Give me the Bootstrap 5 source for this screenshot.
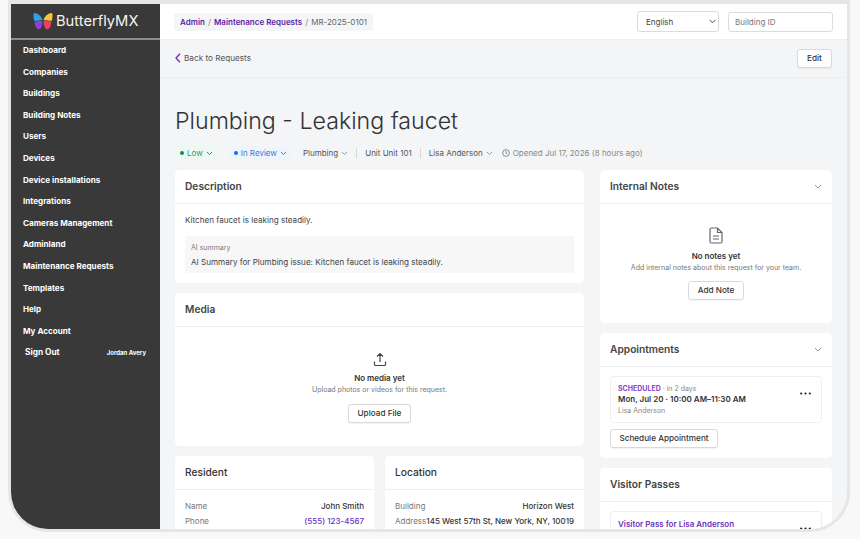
<!DOCTYPE html>
<html lang="en">
<head>
<meta charset="utf-8">
<title>Plumbing - Leaking faucet</title>
<link href="https://cdn.jsdelivr.net/npm/bootstrap@5.3.0/dist/css/bootstrap.min.css" rel="stylesheet">
<style>
html,body{height:539px;overflow:hidden}
body{background:#f8f8f8;font-family:Inter,"Liberation Sans",sans-serif;color:#333;font-size:8px}
.frame{width:842px;height:532px;margin-left:8px;border:3px solid #e6e6e6;border-top-width:4px;border-radius:0 0 40px 40px;overflow:hidden;background:#f4f5f7}
.side{width:149px;flex:none;background:#393939;color:#fff}
.brand{height:36px;border-bottom:2px solid #8a8a8a;font-size:14.7px;color:#f4f4f4;gap:3px;padding-left:22px}
.side-link{display:block;height:21.6px;line-height:21.6px;padding-left:12px;font-size:8.1px;font-weight:700;color:#fff;text-decoration:none;white-space:nowrap}
.signout{height:20px;padding:0 14px;font-weight:700;font-size:8.3px}
.signout span:last-child{font-size:6px}
.topbar{height:36px;background:#fff;border-bottom:1px solid #eceef0;padding:0 14px}
.crumbs{background:#f4f5f7;border-radius:3px;height:18px;padding:0 6px;font-size:8px;font-weight:600;gap:3px;color:#a0a0a0}
.crumbs a{color:#5b1fa8;text-decoration:none}
.crumbs .now{font-weight:400;color:#666}
.lang{width:82px;height:21px;font-size:8px;padding:0 0 0 8px;border-radius:3px;border:1px solid #dcdcdc;color:#444;background-size:7px;background-position:right 2px center;background-color:#fff;font-family:inherit;margin-right:9px}
.bid{width:105px;height:20px;font-size:8px;padding:0 6px;border-radius:3px;border:1px solid #dcdcdc}
.bid::placeholder{color:#777}
.subbar{height:38px;border-bottom:1px solid #eceef0;padding:0 15px;font-size:8.2px;color:#555}
.back{gap:3px}
.edit-btn,.plain-btn{background:#fff;border:1px solid #d9d9d9;border-radius:3px;font-size:8.2px;font-weight:500;color:#333;padding:0;line-height:1;box-shadow:0 1px 1px rgba(0,0,0,.05)}
.edit-btn{width:35px;height:19px}
.pad{padding:0 15px}
.ttl{font-size:23.2px;font-weight:300;color:#333;margin:28px 0 0;line-height:31px;height:31px}
.meta{height:18px;margin-top:7px;font-size:8px;color:#555;white-space:nowrap}
.pill{border-radius:9px;height:14px;padding:0 5px}
.pill-g{background:#eef8f3;color:#2a9d6c;margin-right:11px}
.pill-b{background:#eef4fc;color:#3d7ddb;margin-right:11px}
.dot{width:4px;height:4px;border-radius:50%;margin-right:3px}
.caret{margin-left:3px;flex:none}
.sep{width:1px;height:10px;background:#d8d8d8;margin:0 8px}
.clock{margin:0 3px 0 9px}
.cols{margin-top:8px;gap:16px}
.left-col{width:409px;flex:none}
.right-col{width:232px;flex:none}
.box{background:#fff;border:0;border-radius:4px;box-shadow:0 0 1px rgba(0,0,0,.05);margin-bottom:10px;overflow:hidden}
.box-h{height:34px;padding:0 10px;border-bottom:1px solid #f0f0f0;font-size:10.2px;font-weight:600;color:#444}
.box-h.lite{font-weight:500;color:#333}
.desc{padding:10px 10px 0;height:79px;font-size:8.1px;color:#444}
.ai{background:#f7f7f8;border-radius:3px;height:37px;margin-top:10px;padding:7px 6px}
.ai small{display:block;font-size:7px;color:#777;line-height:10px}
.ai div{line-height:13px;margin-top:3px}
.empty{text-align:center;height:119px}
.empty-m{padding-top:25px}
.empty-n{padding-top:23px}
.empty b{font-size:8px;font-weight:600;color:#333;display:block;line-height:12px}
.empty p{font-size:7px;color:#777;margin:0;line-height:11px}
.plain-btn{height:19px;display:inline-block}
.up{margin-top:9px;width:63px}
.note-btn{margin-top:8px;width:56px}
.ic-up{display:block;margin:0 auto 5px}
.ic-doc{display:block;margin:0 auto 6px}
.res-row{height:15px;font-size:8px;font-weight:500;color:#333;line-height:15px;white-space:nowrap}
.res-row span:first-child{color:#777;font-weight:400}
.res-row a{color:#6a2fc0;text-decoration:none}
.resbody{padding:9px 10px 0;height:60px}
.half{width:199px}
.pair{gap:11px}
.apptwrap{padding:9px 10px 0;height:91px}
.passwrap{padding:9px 10px 0;height:60px}
.appt{border:1px solid #eeeeee;border-radius:4px;height:47px;padding:6px 10px 6px 7px;line-height:11px}
.st{font-size:7px;font-weight:700;color:#8a44c4}
.gray7{font-size:7px;color:#888}
.when{font-size:8px;font-weight:600;color:#333}
.more{margin-top:9px;flex:none}
.pass{color:#6a2fc0;font-size:8px;font-weight:600;margin-top:1px}
.sched{width:108px;margin-top:6px}
.muted-t{color:#888}
</style>
</head>
<body>
<div class="frame d-flex">
  <nav class="side">
    <div class="brand d-flex align-items-center">
      <svg width="20" height="18" viewBox="0 0 20 18" aria-hidden="true">
        <path d="M1 1 C5 1 8 4 9.500 8 L1.500 9 C.5 7 0 3 1 1Z" fill="#2fa3e6"/>
        <path d="M19 1 C15 1 12 4 10.500 8 L18.500 9 C19.500 7 20 3 19 1Z" fill="#f5c63a"/>
        <path d="M1.500 9.500 L9.500 8.800 C9.500 12 8.500 17 6 17.300 C3.500 17.500 2 14 1.500 9.500Z" fill="#8a3fd8"/>
        <path d="M18.500 9.500 L10.500 8.800 C10.500 12 11.500 17 14 17.300 C16.500 17.500 18 14 18.500 9.500Z" fill="#ee3f63"/>
      </svg>
      <span>ButterflyMX</span>
    </div>
    <div>
      <a class="side-link" href="#">Dashboard</a>
      <a class="side-link" href="#">Companies</a>
      <a class="side-link" href="#">Buildings</a>
      <a class="side-link" href="#">Building Notes</a>
      <a class="side-link" href="#">Users</a>
      <a class="side-link" href="#">Devices</a>
      <a class="side-link" href="#">Device installations</a>
      <a class="side-link" href="#">Integrations</a>
      <a class="side-link" href="#">Cameras Management</a>
      <a class="side-link" href="#">Adminland</a>
      <a class="side-link" href="#">Maintenance Requests</a>
      <a class="side-link" href="#">Templates</a>
      <a class="side-link" href="#">Help</a>
      <a class="side-link" href="#">My Account</a>
      <div class="signout d-flex justify-content-between align-items-center"><span>Sign Out</span><span>Jordan Avery</span></div>
    </div>
  </nav>
  <main class="flex-grow-1 overflow-hidden">
    <div class="topbar d-flex align-items-center justify-content-between">
      <div class="crumbs d-flex align-items-center"><a href="#">Admin</a><span>/</span><a href="#">Maintenance Requests</a><span>/</span><span class="now">MR-2025-0101</span></div>
      <div class="d-flex align-items-center">
        <select class="form-select lang"><option>English</option></select>
        <input class="form-control bid" placeholder="Building ID">
      </div>
    </div>
    <div class="subbar d-flex align-items-center justify-content-between">
      <div class="back d-flex align-items-center">
        <svg width="6" height="10" viewBox="0 0 6 10" aria-hidden="true"><path d="M5 .8 1 5l4 4.200" fill="none" stroke="#6a2fa8" stroke-width="1.300"/></svg>
        <span>Back to Requests</span>
      </div>
      <button class="edit-btn" type="button">Edit</button>
    </div>
    <div class="pad">
      <h1 class="ttl">Plumbing - Leaking faucet</h1>
      <div class="meta d-flex align-items-center">
        <span class="pill pill-g d-inline-flex align-items-center"><span class="dot bg-success"></span>Low<svg width="7" height="5" viewBox="0 0 7 5" class="caret"><path d="M1 1l2.500 2.500L6 1" fill="none" stroke="currentColor"/></svg></span>
        <span class="pill pill-b d-inline-flex align-items-center"><span class="dot bg-primary"></span>In Review<svg width="7" height="5" viewBox="0 0 7 5" class="caret"><path d="M1 1l2.500 2.500L6 1" fill="none" stroke="currentColor"/></svg></span>
        <span>Plumbing</span><svg width="7" height="5" viewBox="0 0 7 5" class="caret"><path d="M1 1l2.500 2.500L6 1" fill="none" stroke="#999"/></svg>
        <span class="sep"></span>
        <span>Unit Unit 101</span>
        <span class="sep"></span>
        <span>Lisa Anderson</span><svg width="7" height="5" viewBox="0 0 7 5" class="caret"><path d="M1 1l2.500 2.500L6 1" fill="none" stroke="#999"/></svg>
        <svg width="8" height="8" viewBox="0 0 9 9" class="clock"><circle cx="4.500" cy="4.500" r="3.800" fill="none" stroke="#666" stroke-width=".8"/><path d="M4.500 2.200v2.500l1.500.8" fill="none" stroke="#666" stroke-width=".8"/></svg>
        <span class="muted-t">Opened Jul 17, 2026 (8 hours ago)</span>
      </div>
      <div class="cols d-flex align-items-start">
        <div class="left-col">
          <section class="box">
            <div class="box-h d-flex align-items-center">Description</div>
            <div class="desc">Kitchen faucet is leaking steadily.
              <div class="ai"><small>AI summary</small><div>AI Summary for Plumbing issue: Kitchen faucet is leaking steadily.</div></div>
            </div>
          </section>
          <section class="box">
            <div class="box-h d-flex align-items-center">Media</div>
            <div class="empty empty-m">
              <svg width="14" height="15" viewBox="0 0 14 15" class="ic-up"><path d="M7 10V2M4 4.500 7 1.500l3 3M1.500 9.500v3.200a.8.8 0 0 0 .8.800h9.400a.8.8 0 0 0 .8-.8V9.500" fill="none" stroke="#444" stroke-width="1.200"/></svg>
              <b>No media yet</b><p>Upload photos or videos for this request.</p>
              <button class="plain-btn up" type="button">Upload File</button>
            </div>
          </section>
          <div class="d-flex pair">
            <section class="box flex-fill half">
              <div class="box-h lite d-flex align-items-center">Resident</div>
              <div class="resbody">
                <div class="res-row d-flex justify-content-between"><span>Name</span><span>John Smith</span></div>
                <div class="res-row d-flex justify-content-between"><span>Phone</span><a href="#">(555) 123-4567</a></div>
              </div>
            </section>
            <section class="box flex-fill half">
              <div class="box-h lite d-flex align-items-center">Location</div>
              <div class="resbody">
                <div class="res-row d-flex justify-content-between"><span>Building</span><span>Horizon West</span></div>
                <div class="res-row d-flex justify-content-between"><span>Address</span><span>145 West 57th St, New York, NY, 10019</span></div>
              </div>
            </section>
          </div>
        </div>
        <div class="right-col">
          <section class="box">
            <div class="box-h d-flex align-items-center justify-content-between">Internal Notes<svg width="8" height="5" viewBox="0 0 8 5"><path d="M1 1l3 3 3-3" fill="none" stroke="#999"/></svg></div>
            <div class="empty empty-n">
              <svg width="14" height="17" viewBox="0 0 14 17" class="ic-doc"><path d="M2.500 1h6L13 5.500V14.500a1.500 1.500 0 0 1-1.500 1.500h-9A1.500 1.500 0 0 1 1 14.500v-12A1.500 1.500 0 0 1 2.500 1ZM8.500 1v4.500H13M4 9h6M4 12h6" fill="none" stroke="#666" stroke-width="1.200"/></svg>
              <b>No notes yet</b><p>Add internal notes about this request for your team.</p>
              <button class="plain-btn note-btn" type="button">Add Note</button>
            </div>
          </section>
          <section class="box">
            <div class="box-h d-flex align-items-center justify-content-between">Appointments<svg width="8" height="5" viewBox="0 0 8 5"><path d="M1 1l3 3 3-3" fill="none" stroke="#999"/></svg></div>
            <div class="apptwrap">
              <div class="appt d-flex justify-content-between">
                <div><div><span class="st">SCHEDULED</span><span class="gray7"> · in 2 days</span></div><div class="when">Mon, Jul 20 · 10:00 AM–11:30 AM</div><div class="gray7">Lisa Anderson</div></div>
                <svg class="more" width="11" height="3" viewBox="0 0 11 3" role="img" aria-label="More"><circle cx="1.200" cy="1.500" r="1.100" fill="#222"/><circle cx="5.500" cy="1.500" r="1.100" fill="#222"/><circle cx="9.800" cy="1.500" r="1.100" fill="#222"/></svg>
              </div>
              <button class="plain-btn sched d-block" type="button">Schedule Appointment</button>
            </div>
          </section>
          <section class="box">
            <div class="box-h d-flex align-items-center">Visitor Passes</div>
            <div class="passwrap">
              <div class="appt d-flex justify-content-between"><span class="pass">Visitor Pass for Lisa Anderson</span><svg class="more" width="11" height="3" viewBox="0 0 11 3" role="img" aria-label="More"><circle cx="1.200" cy="1.500" r="1.100" fill="#222"/><circle cx="5.500" cy="1.500" r="1.100" fill="#222"/><circle cx="9.800" cy="1.500" r="1.100" fill="#222"/></svg></div>
            </div>
          </section>
        </div>
      </div>
    </div>
  </main>
</div>
<script src="https://cdn.jsdelivr.net/npm/bootstrap@5.3.0/dist/js/bootstrap.bundle.min.js"></script>
</body>
</html>
